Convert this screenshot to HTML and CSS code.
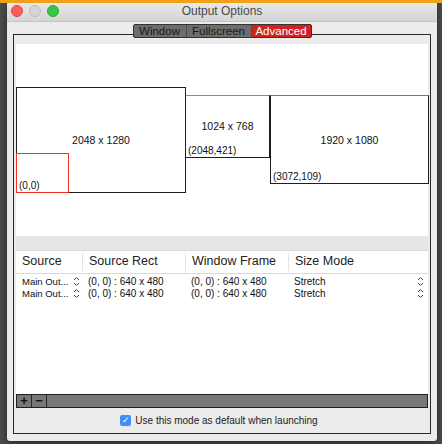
FILE: index.html
```html
<!DOCTYPE html>
<html>
<head>
    <title>Output Options</title>
    <link rel="stylesheet" href="styles.css">
</head>
<body>
    <!-- window -->
    <div class="window">
        <div class="titlebar">
            <div class="lights">
                <span class="light red"></span>
                <span class="light gray"></span>
                <span class="light green"></span>
            </div>
            <div class="title">Output Options</div>
        </div>

        <div class="group">
            <!-- tabs -->
            <div class="tabs">
                <span class="tab">Window</span>
                <span class="tab">Fullscreen</span>
                <span class="tab active">Advanced</span>
            </div>

            <!-- display layout -->
            <div class="canvas">
                <div class="screen s1"><span class="size">2048 x 1280</span></div>
                <div class="screen s2"><span class="size">1024 x 768</span><span class="origin">(2048,421)</span></div>
                <div class="screen s3"><span class="size">1920 x 1080</span><span class="origin">(3072,109)</span></div>
                <div class="screen out"><span class="origin">(0,0)</span></div>
            </div>

            <div class="band"></div>

            <!-- table -->
            <div class="table">
                <div class="row head">
                    <div class="c c1">Source</div>
                    <div class="c c2">Source Rect</div>
                    <div class="c c3">Window Frame</div>
                    <div class="c c4">Size Mode</div>
                </div>
                <div class="row">
                    <div class="c c1">Main Out...
                        <svg class="step" width="7" height="11" viewBox="0 0 7 11"><path d="M1 4 L3.5 1.5 L6 4 M1 7 L3.5 9.5 L6 7" fill="none" stroke="#444" stroke-width="1"/></svg>
                    </div>
                    <div class="c c2">(0, 0) : 640 x 480</div>
                    <div class="c c3">(0, 0) : 640 x 480</div>
                    <div class="c c4">Stretch
                        <svg class="step" width="7" height="11" viewBox="0 0 7 11"><path d="M1 4 L3.5 1.5 L6 4 M1 7 L3.5 9.5 L6 7" fill="none" stroke="#444" stroke-width="1"/></svg>
                    </div>
                </div>
                <div class="row">
                    <div class="c c1">Main Out...
                        <svg class="step" width="7" height="11" viewBox="0 0 7 11"><path d="M1 4 L3.5 1.5 L6 4 M1 7 L3.5 9.5 L6 7" fill="none" stroke="#444" stroke-width="1"/></svg>
                    </div>
                    <div class="c c2">(0, 0) : 640 x 480</div>
                    <div class="c c3">(0, 0) : 640 x 480</div>
                    <div class="c c4">Stretch
                        <svg class="step" width="7" height="11" viewBox="0 0 7 11"><path d="M1 4 L3.5 1.5 L6 4 M1 7 L3.5 9.5 L6 7" fill="none" stroke="#444" stroke-width="1"/></svg>
                    </div>
                </div>
            </div>
            <div class="toolbar">
                <span class="btn">+</span>
                <span class="btn">&minus;</span>
            </div>

            <label class="check">
                <span class="box">&#10003;</span>
                Use this mode as default when launching
            </label>
        </div>
    </div>
</body>
</html>
```

FILE: styles.css
```css
/* page behind the window */
body {
    margin: 0;
    height: 444px;
    overflow: hidden;
    background: #4d4d4d;
    border-top: 3px solid #f0a11c;
    font-family: "Liberation Sans", Arial, sans-serif;
    color: #111;
}

.window {
    margin: -3px 0 0 7px;
    width: 430px;
    height: 441px;
    background: #ececec;
    border-radius: 5px 5px 3px 3px;
    box-shadow: 0 2px 8px rgba(0, 0, 0, 0.5);
    overflow: hidden;
}

.titlebar {
    height: 22px;
    background: linear-gradient(#ebebeb, #d5d5d5);
    border-bottom: 1px solid #c4c4c4;
    box-sizing: border-box;
    display: flex;
    align-items: center;
}
.lights {
    display: flex;
    gap: 6px;
    padding-left: 4px;
}
.light {
    width: 12px;
    height: 12px;
    border-radius: 50%;
    box-sizing: border-box;
}
.light.red { background: #fc5f57; border: 1px solid #df4744; }
.light.gray { background: #d4d4d4; border: 1px solid #bdbdbd; }
.light.green { background: #34c84a; border: 1px solid #27aa35; }
.title {
    flex: 1;
    text-align: center;
    font-size: 12px;
    color: #4a4a4a;
    margin-right: 52px;
}

.group {
    margin: 12px 0 0 6px;
    width: 418px;
    height: 400px;
    box-sizing: border-box;
    border: 1px solid #2b2b2b;
    padding: 0 2px;
}

.tabs {
    display: flex;
    width: 179px;
    margin: -11px auto 6px;
    height: 14px;
    border: 1px solid #333;
    border-radius: 2px;
    background: #6d6d6d;
    box-sizing: border-box;
    overflow: hidden;
}
.tab {
    font-size: 11.5px;
    line-height: 12px;
    color: #1a1a1a;
    text-align: center;
    border-right: 1px solid #4b4b4b;
}
.tab:first-child { width: 52px; }
.tab:nth-child(2) { width: 64px; }
.tab.active {
    flex: 1;
    background: #cf2323;
    color: #fff;
    border-right: 0;
}

.canvas {
    position: relative;
    height: 192px;
    background: #fff;
    font-size: 10.5px;
}
.screen {
    position: absolute;
    box-sizing: border-box;
    border: 1px solid #1e1e1e;
    display: flex;
    align-items: center;
    justify-content: center;
}
.s1 { left: 0; top: 43px; width: 170px; height: 106px; }
.s2 { left: 169px; top: 51px; width: 85px; height: 63px; border-top-color: #888; }
.s3 { left: 254px; top: 51px; width: 159px; height: 89px; border-top-color: #777; }
.out { left: 0; top: 109px; width: 53px; height: 40px; border: 1px solid #f0321e; }
.s2 .size { margin-top: -2px; }
.origin {
    position: absolute;
    left: 2px;
    bottom: 1px;
    font-size: 10px;
}

.band {
    height: 14px;
    background: #e6e6e6;
}

.table {
    height: 144px;
    background: #fff;
    font-size: 10px;
    border-top: 1px solid #dcdcdc;
    box-sizing: border-box;
}
.row {
    display: flex;
    height: 12px;
    line-height: 12px;
}
.row.head {
    height: 22px;
    line-height: 20px;
    font-size: 12.5px;
    color: #222;
    border-bottom: 1px solid #d9d9d9;
    margin-bottom: 2px;
}
.c {
    padding-left: 6px;
    box-sizing: border-box;
    position: relative;
}
.head .c + .c { border-left: 1px solid #e3e3e3; margin: 2px 0; line-height: 17px; }
.c1 { width: 66px; }
.row:not(.head) .c1 { font-size: 9.5px; }
.c2 { width: 103px; }
.c3 { width: 103px; }
.c4 { flex: 1; }
.step {
    position: absolute;
    right: 4px;
    top: 0;
}
.c1 .step { right: 2px; }
.c4 .step { right: 4px; }

.toolbar {
    display: flex;
    height: 14px;
    background: #777;
    border: 1px solid #1f1f1f;
    box-sizing: border-box;
}
.btn {
    width: 14px;
    border-right: 1px solid #2a2a2a;
    color: #111;
    font-size: 13px;
    line-height: 12px;
    text-align: center;
    font-weight: bold;
}

.check {
    display: flex;
    justify-content: center;
    align-items: center;
    gap: 4px;
    margin-top: 4px;
    height: 16px;
    font-size: 10px;
    color: #222;
    padding-right: 6px;
}
.box {
    width: 11px;
    height: 11px;
    border-radius: 2px;
    background: #3d8ff7;
    color: #fff;
    font-size: 9px;
    line-height: 11px;
    text-align: center;
}
```
